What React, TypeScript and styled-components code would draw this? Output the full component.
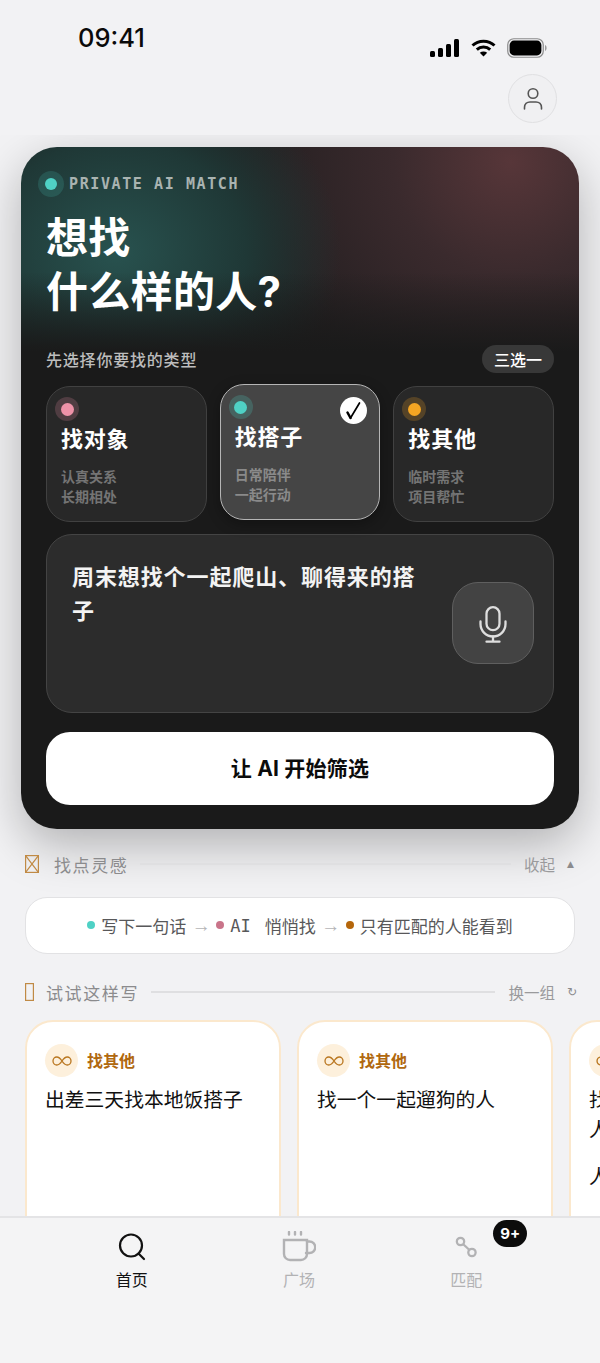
import React from "react";
import styled, { createGlobalStyle } from "styled-components";

const FONT = `Inter, "Noto Sans CJK SC", sans-serif`;
const MONO = `"DejaVu Sans Mono", "Liberation Mono", "Noto Sans CJK SC", monospace`;

const Global = createGlobalStyle`
  html, body { margin: 0; padding: 0; background: #f2f2f4; }
  * { box-sizing: border-box; }
  #root { width: 600px; height: 1363px; }
`;

const Screen = styled.div`
  width: 600px; height: 1363px; display: flex; flex-direction: column;
  background: #f2f2f4; overflow: hidden; font-family: ${FONT};
`;
const Top = styled.header`
  flex: 0 0 135px; padding: 22px 43px 0 78px; display: flex; flex-direction: column;
`;
const StatusRow = styled.div`display: flex; justify-content: space-between; height: 52px;`;
const Time = styled.div`font-size: 25.5px; line-height: 32px; font-weight: 500; color: #0a0a0a;`;
const StatusIcons = styled.div`display: flex; align-items: center; gap: 11px; margin: 16px 10px 0 0; height: 20px;`;
const AvatarRow = styled.div`display: flex; justify-content: flex-end;`;
const Avatar = styled.div`
  width: 49px; height: 49px; border-radius: 50%; background: #f0f0f2; border: 1.5px solid #e0e0e2;
  display: flex; align-items: center; justify-content: center;
`;

const Scroll = styled.main`flex: 1; min-height: 0; overflow: hidden; padding-top: 12px;`;
const Hero = styled.section`
  margin: 0 21px; height: 682px; border-radius: 36px; padding: 24px 25px;
  background:
    linear-gradient(180deg, rgba(26,26,26,0) 125px, #1a1a1a 205px),
    radial-gradient(ellipse 225px 190px at 95px 105px, #28524f 0%, #1f3836 58%, rgba(26,26,26,0) 100%),
    radial-gradient(ellipse 310px 300px at 490px 15px, #573639 0%, #3a2a2d 38%, #2a2224 72%, rgba(26,26,26,0) 100%),
    #1a1a1a;
  box-shadow: 0 16px 48px rgba(0,0,0,.27);
`;
const Eyebrow = styled.div`display: flex; align-items: center; gap: 5px; margin-left: -8px; height: 26px;`;
const Halo = styled.span<{ $c: string; $h: string; $size?: number; $dot?: number }>`
  width: ${(p) => p.$size ?? 26}px; height: ${(p) => p.$size ?? 26}px; border-radius: 50%;
  background: ${(p) => p.$h}; display: flex; align-items: center; justify-content: center; flex: none;
  &::after { content: ""; width: ${(p) => p.$dot ?? 12}px; height: ${(p) => p.$dot ?? 12}px; border-radius: 50%; background: ${(p) => p.$c}; }
`;
const EyebrowText = styled.span`
  font-family: ${MONO}; font-size: 15px; font-weight: 700; letter-spacing: 1.6px; color: #a9b3b1;
`;
const Title = styled.h1`
  margin: 14px 0 0; font-size: 42px; line-height: 54px; font-weight: 700; color: #fff; letter-spacing: .3px;
`;
const LabelRow = styled.div`margin-top: 26px; display: flex; justify-content: space-between; align-items: center; height: 28px;`;
const Label = styled.span`font-size: 16px; font-weight: 500; color: #bdbdbd; letter-spacing: .8px;`;
const Pill = styled.span`
  width: 72px; height: 28px; border-radius: 14px; background: #383838; color: #fff; font-size: 16px; font-weight: 500;
  display: flex; align-items: center; justify-content: center;
`;
const Types = styled.div`margin-top: 13px; display: grid; grid-template-columns: repeat(3, 1fr); gap: 13px;`;
const TypeCard = styled.div<{ $on?: boolean }>`
  position: relative; height: 136px; border-radius: 24px; padding: 10px 14px 0;
  background: ${(p) => (p.$on ? "#454545" : "#282828")};
  border: ${(p) => (p.$on ? "1.5px solid #b5b5b5" : "1.5px solid #414141")};
  transform: ${(p) => (p.$on ? "translateY(-2px)" : "none")};
  ${(p) => (p.$on ? "box-shadow: 0 4px 14px rgba(0,0,0,.3);" : "")}
`;
const TypeDot = styled.div`margin-left: -6px; height: 24px;`;
const TypeName = styled.div`margin-top: 3px; font-size: 22px; line-height: 30px; font-weight: 700; color: #fff; letter-spacing: .8px;`;
const TypeSub = styled.div<{ $on?: boolean }>`
  margin-top: 13px; font-size: 14px; line-height: 19.5px; font-weight: 700; color: ${(p) => (p.$on ? "#8a8a8a" : "#747474")};
`;
const Check = styled.span`
  position: absolute; top: 12px; right: 12px; width: 27px; height: 27px; border-radius: 50%; background: #fff;
  display: flex; align-items: center; justify-content: center;
`;
const InputBox = styled.div`
  margin-top: 12px; height: 179px; border-radius: 26px; background: #2c2c2c; border: 1.5px solid #444;
  padding: 25px 19px 0 25px; display: flex; justify-content: space-between;
`;
const InputText = styled.div`
  width: 362px; font-size: 22px; line-height: 34px; font-weight: 600; color: #f3f3f3; letter-spacing: .9px;
`;
const MicButton = styled.div`
  width: 82px; height: 82px; border-radius: 26px; margin-top: 22px; background: #434343; border: 1.5px solid #5f5f5f;
  display: flex; align-items: center; justify-content: center; padding-top: 3px;
`;
const Cta = styled.button`
  display: block; width: 100%; margin-top: 19px; height: 73px; border: 0; border-radius: 24px; background: #fff; color: #0b0b0b;
  font-family: ${FONT}; font-size: 21px; letter-spacing: .2px; font-weight: 700; padding: 0 0 3px;
`;

const SectionRow = styled.div<{ $mt: number }>`
  margin: ${(p) => p.$mt}px 25px 0; height: 20px; display: flex; align-items: center;
`;
const SectionTitle = styled.span<{ $ml: number }>`
  margin-left: ${(p) => p.$ml}px; font-size: 17px; letter-spacing: 1.6px; color: #8b8b8d; white-space: nowrap;
`;
const Rule = styled.span`flex: 1; height: 2px; background: #dfdfe1; margin: 0 13px 0 12px;`;
const SectionAction = styled.span`font-size: 15.5px; color: #9a9a9c; white-space: nowrap;`;
const Caret = styled.span<{ $size: number }>`margin-left: 12px; width: 8px; font-family: "DejaVu Sans", sans-serif; font-size: ${(p) => p.$size}px; color: #8b8b8d;`;
const Steps = styled.div`
  margin: 23px 25px 0; height: 57px; border-radius: 22px; background: #fff; border: 1.5px solid #e2e2e4;
  display: flex; align-items: center; justify-content: center; font-size: 17px; color: #58585a;
`;
const StepDot = styled.i<{ $c: string }>`
  width: 8px; height: 8px; border-radius: 50%; background: ${(p) => p.$c}; margin: -2px 6px 0 0;
`;
const Arrow = styled.span`color: #b4b4b6; margin: 0 5.5px; font-family: "Liberation Sans", sans-serif; font-size: 19px;`;
const MonoAi = styled.span`font-family: ${MONO}; font-size: 17px; margin-right: 14px;`;
const Cards = styled.div`margin-top: 18px; padding-left: 25px; display: flex; gap: 16px;`;
const Idea = styled.article`
  flex: 0 0 256px; height: 260px; padding: 22px 18px; border-radius: 28px; background: #fff; border: 2px solid #fbe8cd;
`;
const IdeaHead = styled.div`display: flex; align-items: center; gap: 9px;`;
const IdeaIcon = styled.span`
  width: 33px; height: 33px; border-radius: 50%; background: #fdf0dc; display: flex; align-items: center; justify-content: center;
`;
const IdeaTag = styled.span`font-size: 16px; line-height: 30px; font-weight: 700; color: #b0680f;`;
const IdeaText = styled.p`margin: 8px 0 0; font-size: 19.800px; line-height: 30px; font-weight: 400; color: #111;`;
const IdeaExtra = styled.p`margin: 17px 0 0; font-size: 19.800px; line-height: 30px; font-weight: 400; color: #111;`;

const TabBar = styled.nav`
  flex: 0 0 147px; padding: 0 50px 0 48px; background: #f4f4f5; border-top: 2px solid #e4e4e6;
  display: grid; grid-template-columns: repeat(3, 1fr); align-items: start;
`;
const Tab = styled.div<{ $on?: boolean }>`
  position: relative; display: flex; flex-direction: column; align-items: center; padding-top: 11px;
  color: ${(p) => (p.$on ? "#111" : "#b2b2b4")}; font-size: 16px; line-height: 22px;
`;
const TabIcon = styled.div`height: 36px; width: 40px; display: flex; align-items: center; justify-content: center; margin-bottom: 4px;`;
const Badge = styled.span`
  position: absolute; top: 2px; left: 110.500px; width: 34px; height: 27px; border-radius: 14px; background: #0c0c0c; color: #fff;
  font-size: 15px; font-weight: 700; display: flex; align-items: center; justify-content: center;
`;

const Tofu = ({ w, x }: { w: number; x?: boolean }) => (
  <svg width={w} height={18} viewBox={`0 0 ${w} 18`} fill="none" stroke="#c08a45" strokeWidth="1.2">
    <rect x=".6" y=".6" width={w - 1.2} height="16.8" />
    {x && <path d={`M.6 .6 L${w - .6} 17.4 M${w - .6} .6 L.6 17.4`} />}
  </svg>
);
const Infinity8 = () => (
  <svg width="20" height="10" viewBox="0 0 20 10" fill="none" stroke="#b9761f" strokeWidth="1.3">
    <path d="M10 5C8.3 2.4 6.8 1 4.8 1 2.6 1 1 2.8 1 5s1.6 4 3.8 4c2 0 3.5-1.4 5.2-4zm0 0c1.7-2.6 3.2-4 5.2-4C17.4 1 19 2.8 19 5s-1.6 4-3.8 4c-2 0-3.5-1.4-5.2-4z" />
  </svg>
);
const IdeaCard = ({ text, extra }: { text: string; extra?: string }) => (
  <Idea>
    <IdeaHead><IdeaIcon><Infinity8 /></IdeaIcon><IdeaTag>找其他</IdeaTag></IdeaHead>
    <IdeaText>{text}</IdeaText>
    {extra && <IdeaExtra>{extra}</IdeaExtra>}
  </Idea>
);

export default function App() {
  return (
    <Screen>
      <Global />
      <Top>
        <StatusRow>
          <Time>09:41</Time>
          <StatusIcons>
            <svg width="30" height="18" viewBox="0 0 30 18" fill="#000">
              <rect x="0" y="12" width="5" height="6" rx="1.5" /><rect x="8" y="9" width="5" height="9" rx="1.5" />
              <rect x="16" y="5" width="5" height="13" rx="1.5" /><rect x="24" y="0" width="5" height="18" rx="1.5" />
            </svg>
            <svg width="25" height="18" viewBox="0 0 25 18" fill="none" stroke="#000" strokeWidth="3">
              <path d="M1.5 6.5C7.5 .8 17.5 .8 23.5 6.5" /><path d="M5.8 10.6C9.6 7 15.4 7 19.2 10.6" />
              <path d="M12.5 17.5L8.8 13.8C11 12 14 12 16.2 13.8z" fill="#000" stroke="none" />
            </svg>
            <svg width="40" height="20" viewBox="0 0 40 20" fill="none">
              <rect x=".75" y=".75" width="35.5" height="18.5" rx="6" stroke="#8c8c8c" strokeWidth="1.2" />
              <rect x="2.6" y="2.6" width="31.8" height="14.8" rx="4.4" fill="#000" />
              <path d="M38 7v6c1-.4 1.6-1.6 1.6-3S39 7.400 38 7z" fill="#9a9a9a" />
            </svg>
          </StatusIcons>
        </StatusRow>
        <AvatarRow>
          <Avatar>
            <svg width="22" height="24" viewBox="0 0 22 24" fill="none" stroke="#555" strokeWidth="1.6" strokeLinecap="round">
              <circle cx="11" cy="6.500" r="4.800" /><path d="M2.500 22v-1.500C2.500 17 5 15 8 15h6c3 0 5.500 2 5.500 5.500V22" />
            </svg>
          </Avatar>
        </AvatarRow>
      </Top>
      <Scroll>
        <Hero>
          <Eyebrow><Halo $c="#4fd1c5" $h="rgba(79,209,197,.17)" /><EyebrowText>PRIVATE AI MATCH</EyebrowText></Eyebrow>
          <Title>想找<br />什么样的人?</Title>
          <LabelRow><Label>先选择你要找的类型</Label><Pill>三选一</Pill></LabelRow>
          <Types>
            <TypeCard>
              <TypeDot><Halo $c="#ee92a8" $h="rgba(238,146,168,.2)" $size={24} $dot={13} /></TypeDot>
              <TypeName>找对象</TypeName><TypeSub>认真关系<br />长期相处</TypeSub>
            </TypeCard>
            <TypeCard $on>
              <TypeDot><Halo $c="#4fd1c5" $h="rgba(79,209,197,.22)" $size={24} $dot={13} /></TypeDot>
              <TypeName>找搭子</TypeName><TypeSub $on>日常陪伴<br />一起行动</TypeSub>
              <Check>
                <svg width="17" height="21" viewBox="0 0 17 21" fill="none" stroke="#000" strokeLinecap="round" strokeLinejoin="round">
                  <path d="M2.500 12.500L5.500 18" strokeWidth="2.500" /><path d="M5.500 18L14.500 3" strokeWidth="1.700" />
                </svg>
              </Check>
            </TypeCard>
            <TypeCard>
              <TypeDot><Halo $c="#f5a623" $h="rgba(245,166,35,.22)" $size={24} $dot={13} /></TypeDot>
              <TypeName>找其他</TypeName><TypeSub>临时需求<br />项目帮忙</TypeSub>
            </TypeCard>
          </Types>
          <InputBox>
            <InputText>周末想找个一起爬山、聊得来的搭子</InputText>
            <MicButton>
              <svg width="28" height="37" viewBox="0 0 28 37" fill="none" stroke="#dedede" strokeWidth="2.300" strokeLinecap="round">
                <rect x="7.500" y="1.200" width="13" height="23" rx="6.500" />
                <path d="M1.500 15.500v2.500a12.500 12.500 0 0 0 25 0v-2.500" />
                <path d="M14 30.500v5M7.500 35.700h13" />
              </svg>
            </MicButton>
          </InputBox>
          <Cta>让 AI 开始筛选</Cta>
        </Hero>
        <SectionRow $mt={25}>
          <Tofu w={14} x /><SectionTitle $ml={15}>找点灵感</SectionTitle><Rule />
          <SectionAction>收起</SectionAction><Caret $size={9}>▲</Caret>
        </SectionRow>
        <Steps>
          <StepDot $c="#4fd1c5" />写下一句话<Arrow>→</Arrow>
          <StepDot $c="#c9748a" /><MonoAi>AI</MonoAi>悄悄找<Arrow>→</Arrow>
          <StepDot $c="#b5660a" />只有匹配的人能看到
        </Steps>
        <SectionRow $mt={28}>
          <Tofu w={9} /><SectionTitle $ml={12}>试试这样写</SectionTitle><Rule />
          <SectionAction>换一组</SectionAction><Caret $size={12}>↻</Caret>
        </SectionRow>
        <Cards>
          <IdeaCard text="出差三天找本地饭搭子" />
          <IdeaCard text="找一个一起遛狗的人" />
          <IdeaCard text="找一个周末一起看展的人" extra="人" />
        </Cards>
      </Scroll>
      <TabBar>
        <Tab $on>
          <TabIcon>
            <svg width="30" height="30" viewBox="0 0 30 30" fill="none" stroke="#111" strokeWidth="2.200" strokeLinecap="round">
              <circle cx="14" cy="13.500" r="11" /><path d="M21.500 21.500L27 27" />
            </svg>
          </TabIcon>
          首页
        </Tab>
        <Tab>
          <TabIcon>
            <svg width="34" height="32" viewBox="0 0 34 32" fill="none" stroke="#b2b2b4" strokeWidth="2.400" strokeLinecap="round">
              <path d="M7 1v2.500M13 1v2.500M19 1v2.500" />
              <path d="M2 9h23v14a6 6 0 0 1-6 6H8a6 6 0 0 1-6-6z" /><path d="M25 10.500h2.500a5 5 0 0 1 0 11.500H24" />
            </svg>
          </TabIcon>
          广场
        </Tab>
        <Tab>
          <TabIcon>
            <svg width="22" height="22" viewBox="0 0 24 24" fill="none" stroke="#b2b2b4" strokeWidth="2.500">
              <circle cx="6" cy="6" r="4" /><circle cx="18.500" cy="18" r="4" /><path d="M9 9l6.500 6" />
            </svg>
          </TabIcon>
          匹配
          <Badge>9+</Badge>
        </Tab>
      </TabBar>
    </Screen>
  );
}
